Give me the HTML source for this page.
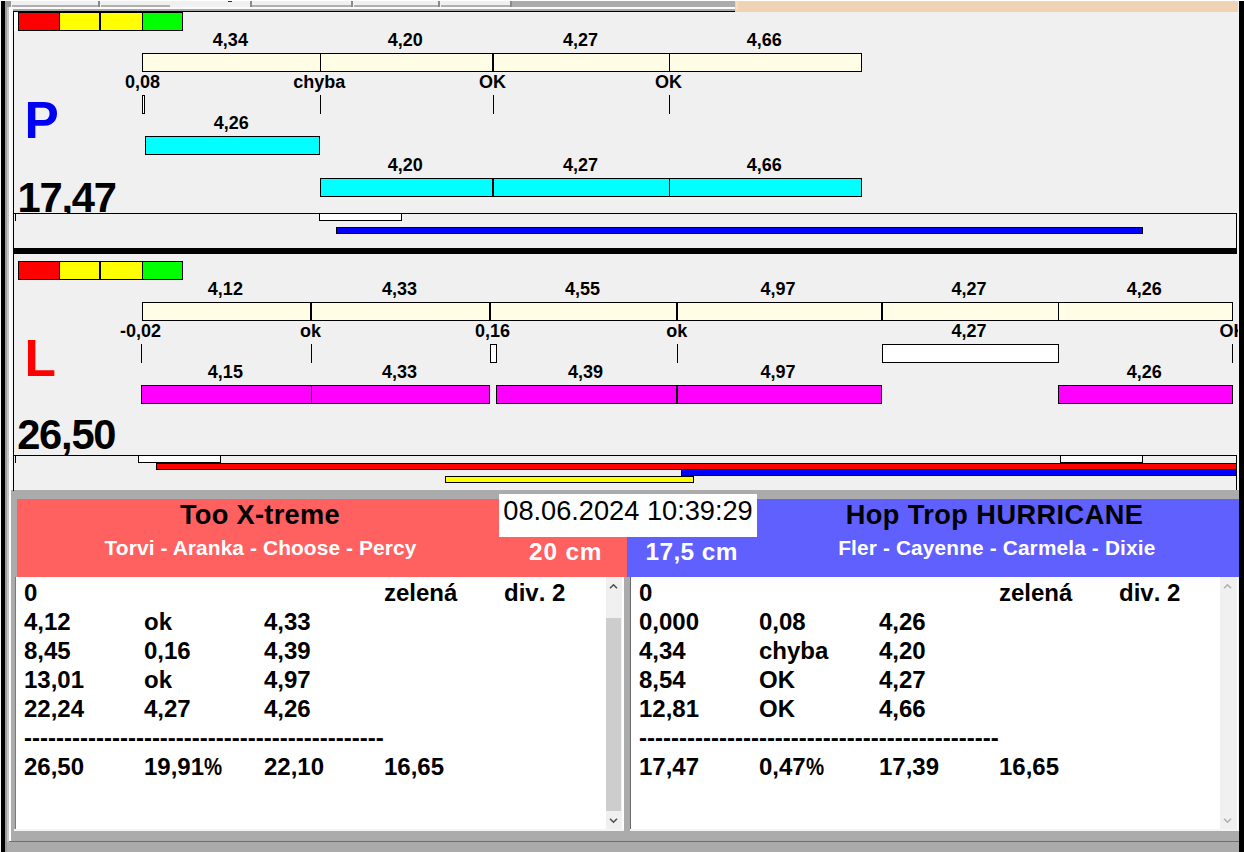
<!DOCTYPE html>
<html><head><meta charset="utf-8"><title>Timing</title>
<style>
html,body{margin:0;padding:0}
body{width:1244px;height:852px;position:relative;overflow:hidden;background:#F0F0F0;font-family:"Liberation Sans",sans-serif;font-kerning:none}
.r,.b,.t,.clip{position:absolute}
.b{box-sizing:border-box;border:1px solid #000}
.t{white-space:nowrap;color:#000}
.bl{font-weight:bold}
.rg{font-weight:normal}
.k{font-kerning:normal}
.clip{overflow:hidden}
.pc{display:inline-block;transform:scaleX(.85);transform-origin:0 50%}
</style></head><body>
<div class="r" style="left:0px;top:0px;width:1244px;height:1px;background:#ffffff"></div>
<div class="r" style="left:10px;top:1px;width:501px;height:9px;background:#f0f0f0"></div>
<div class="r" style="left:12px;top:5px;width:87px;height:2px;background:#b0b0b0"></div>
<div class="r" style="left:101px;top:5px;width:69px;height:2px;background:#b0b0b0"></div>
<div class="r" style="left:252px;top:5px;width:100px;height:2px;background:#b0b0b0"></div>
<div class="r" style="left:354px;top:5px;width:85px;height:2px;background:#b0b0b0"></div>
<div class="r" style="left:441px;top:5px;width:70px;height:2px;background:#b0b0b0"></div>
<div class="r" style="left:98px;top:1px;width:2px;height:7px;background:#8a8a8a"></div>
<div class="r" style="left:250px;top:1px;width:2px;height:7px;background:#8a8a8a"></div>
<div class="r" style="left:351px;top:1px;width:2px;height:7px;background:#8a8a8a"></div>
<div class="r" style="left:438px;top:1px;width:2px;height:7px;background:#8a8a8a"></div>
<div class="r" style="left:510px;top:1px;width:2px;height:7px;background:#8a8a8a"></div>
<div class="r" style="left:228px;top:1px;width:4px;height:1px;background:#333"></div>
<div class="r" style="left:512px;top:1px;width:223px;height:6px;background:#ababab"></div>
<div class="r" style="left:10px;top:7px;width:725px;height:2px;background:#fbfbfb"></div>
<div class="r" style="left:735px;top:1px;width:503px;height:11px;background:#F0D2B4"></div>
<div class="r" style="left:735px;top:1px;width:503px;height:1px;background:#E8D8C4"></div>
<div class="r" style="left:736px;top:2px;width:2px;height:8px;background:#F8E0C0"></div>
<div class="r" style="left:10px;top:9px;width:725px;height:2px;background:#a6a6a6"></div>
<div class="r" style="left:13px;top:11px;width:722px;height:1px;background:#000"></div>
<div class="r" style="left:14px;top:12px;width:5px;height:19px;background:#fff"></div>
<div class="b" style="left:18px;top:12px;width:42px;height:19px;background:#FF0000;"></div>
<div class="b" style="left:59px;top:12px;width:41px;height:19px;background:#FFFF00;"></div>
<div class="b" style="left:100px;top:12px;width:43px;height:19px;background:#FFFF00;"></div>
<div class="b" style="left:142px;top:12px;width:41px;height:19px;background:#00FF00;"></div>
<div class="b" style="left:142px;top:53px;width:179px;height:19px;background:#FFFDE6;"></div>
<div class="b" style="left:320px;top:53px;width:173px;height:19px;background:#FFFDE6;"></div>
<div class="b" style="left:493px;top:53px;width:177px;height:19px;background:#FFFDE6;"></div>
<div class="b" style="left:669px;top:53px;width:193px;height:19px;background:#FFFDE6;"></div>
<div class="t bl" style="top:31.06px;font-size:18px;line-height:18px;left:80.40px;width:300px;text-align:center;">4,34</div>
<div class="t bl" style="top:31.06px;font-size:18px;line-height:18px;left:255.30px;width:300px;text-align:center;">4,20</div>
<div class="t bl" style="top:31.06px;font-size:18px;line-height:18px;left:430.50px;width:300px;text-align:center;">4,27</div>
<div class="t bl" style="top:31.06px;font-size:18px;line-height:18px;left:614.30px;width:300px;text-align:center;">4,66</div>
<div class="t bl" style="top:73.06px;font-size:18px;line-height:18px;left:-7.40px;width:300px;text-align:center;">0,08</div>
<div class="t bl" style="top:73.06px;font-size:18px;line-height:18px;left:169.30px;width:300px;text-align:center;">chyba</div>
<div class="t bl" style="top:73.06px;font-size:18px;line-height:18px;left:342.50px;width:300px;text-align:center;">OK</div>
<div class="t bl" style="top:73.06px;font-size:18px;line-height:18px;left:518.50px;width:300px;text-align:center;">OK</div>
<div class="b" style="left:142px;top:95px;width:3px;height:19px;background:#fff;"></div>
<div class="r" style="left:320px;top:95px;width:1px;height:19px;background:#000"></div>
<div class="r" style="left:493px;top:95px;width:1px;height:19px;background:#000"></div>
<div class="r" style="left:669px;top:95px;width:1px;height:19px;background:#000"></div>
<div class="t bl" style="top:114.06px;font-size:18px;line-height:18px;left:81.30px;width:300px;text-align:center;">4,26</div>
<div class="b" style="left:145px;top:136px;width:175px;height:19px;background:#00FFFF;"></div>
<div class="t bl" style="top:156.06px;font-size:18px;line-height:18px;left:255.30px;width:300px;text-align:center;">4,20</div>
<div class="t bl" style="top:156.06px;font-size:18px;line-height:18px;left:430.50px;width:300px;text-align:center;">4,27</div>
<div class="t bl" style="top:156.06px;font-size:18px;line-height:18px;left:614.30px;width:300px;text-align:center;">4,66</div>
<div class="b" style="left:320px;top:178px;width:173px;height:19px;background:#00FFFF;"></div>
<div class="b" style="left:493px;top:178px;width:177px;height:19px;background:#00FFFF;"></div>
<div class="b" style="left:669px;top:178px;width:193px;height:19px;background:#00FFFF;"></div>
<div class="t bl" style="top:94.79px;font-size:51.4px;line-height:51.4px;left:24.60px;color:#0000F2;">P</div>
<div class="clip" style="left:14px;top:170px;width:300px;height:43px">
<div class="t bl" style="top:7.00px;font-size:41.7px;line-height:41.7px;left:3.60px;letter-spacing:-1.25px;">17,47</div>
</div>
<div class="r" style="left:14px;top:213px;width:1223px;height:1px;background:#000"></div>
<div class="r" style="left:15px;top:213px;width:1px;height:8px;background:#000"></div>
<div class="r" style="left:1236px;top:213px;width:1px;height:35px;background:#000"></div>
<div class="b" style="left:319px;top:213px;width:83px;height:8px;background:#fff;"></div>
<div class="b" style="left:336px;top:227px;width:807px;height:7px;background:#0000FF;"></div>
<div class="r" style="left:14px;top:248px;width:1223px;height:6px;background:#000"></div>
<div class="b" style="left:18px;top:261px;width:42px;height:19px;background:#FF0000;"></div>
<div class="b" style="left:59px;top:261px;width:41px;height:19px;background:#FFFF00;"></div>
<div class="b" style="left:100px;top:261px;width:43px;height:19px;background:#FFFF00;"></div>
<div class="b" style="left:142px;top:261px;width:41px;height:19px;background:#00FF00;"></div>
<div class="b" style="left:142px;top:302px;width:169px;height:19px;background:#FFFDE6;"></div>
<div class="b" style="left:311px;top:302px;width:179px;height:19px;background:#FFFDE6;"></div>
<div class="b" style="left:490px;top:302px;width:187px;height:19px;background:#FFFDE6;"></div>
<div class="b" style="left:677px;top:302px;width:205px;height:19px;background:#FFFDE6;"></div>
<div class="b" style="left:882px;top:302px;width:177px;height:19px;background:#FFFDE6;"></div>
<div class="b" style="left:1058px;top:302px;width:175px;height:19px;background:#FFFDE6;"></div>
<div class="t bl" style="top:280.06px;font-size:18px;line-height:18px;left:75.40px;width:300px;text-align:center;">4,12</div>
<div class="t bl" style="top:280.06px;font-size:18px;line-height:18px;left:249.50px;width:300px;text-align:center;">4,33</div>
<div class="t bl" style="top:280.06px;font-size:18px;line-height:18px;left:432.50px;width:300px;text-align:center;">4,55</div>
<div class="t bl" style="top:280.06px;font-size:18px;line-height:18px;left:628.00px;width:300px;text-align:center;">4,97</div>
<div class="t bl" style="top:280.06px;font-size:18px;line-height:18px;left:819.00px;width:300px;text-align:center;">4,27</div>
<div class="t bl" style="top:280.06px;font-size:18px;line-height:18px;left:994.30px;width:300px;text-align:center;">4,26</div>
<div class="t bl" style="top:322.06px;font-size:18px;line-height:18px;left:-9.40px;width:300px;text-align:center;">-0,02</div>
<div class="t bl" style="top:322.06px;font-size:18px;line-height:18px;left:160.60px;width:300px;text-align:center;">ok</div>
<div class="t bl" style="top:322.06px;font-size:18px;line-height:18px;left:342.50px;width:300px;text-align:center;">0,16</div>
<div class="t bl" style="top:322.06px;font-size:18px;line-height:18px;left:526.80px;width:300px;text-align:center;">ok</div>
<div class="t bl" style="top:322.06px;font-size:18px;line-height:18px;left:819.00px;width:300px;text-align:center;">4,27</div>
<div class="clip" style="left:1200px;top:318px;width:38px;height:26px">
<div class="t bl" style="top:4.06px;font-size:18px;line-height:18px;left:19.50px;">OK</div>
</div>
<div class="r" style="left:141px;top:344px;width:1px;height:19px;background:#000"></div>
<div class="r" style="left:311px;top:344px;width:1px;height:19px;background:#000"></div>
<div class="b" style="left:490px;top:344px;width:7px;height:19px;background:#fff;"></div>
<div class="r" style="left:677px;top:344px;width:1px;height:19px;background:#000"></div>
<div class="b" style="left:882px;top:344px;width:177px;height:19px;background:#fff;"></div>
<div class="r" style="left:1232px;top:344px;width:1px;height:19px;background:#000"></div>
<div class="t bl" style="top:363.06px;font-size:18px;line-height:18px;left:75.40px;width:300px;text-align:center;">4,15</div>
<div class="t bl" style="top:363.06px;font-size:18px;line-height:18px;left:249.50px;width:300px;text-align:center;">4,33</div>
<div class="t bl" style="top:363.06px;font-size:18px;line-height:18px;left:435.50px;width:300px;text-align:center;">4,39</div>
<div class="t bl" style="top:363.06px;font-size:18px;line-height:18px;left:628.00px;width:300px;text-align:center;">4,97</div>
<div class="t bl" style="top:363.06px;font-size:18px;line-height:18px;left:994.30px;width:300px;text-align:center;">4,26</div>
<div class="b" style="left:141px;top:385px;width:171px;height:19px;background:#FF00FF;"></div>
<div class="b" style="left:311px;top:385px;width:179px;height:19px;background:#FF00FF;"></div>
<div class="b" style="left:496px;top:385px;width:181px;height:19px;background:#FF00FF;"></div>
<div class="b" style="left:677px;top:385px;width:205px;height:19px;background:#FF00FF;"></div>
<div class="b" style="left:1058px;top:385px;width:175px;height:19px;background:#FF00FF;"></div>
<div class="t bl" style="top:333.29px;font-size:51.4px;line-height:51.4px;left:24.50px;color:#FF0000;">L</div>
<div class="t bl" style="top:414.00px;font-size:41.7px;line-height:41.7px;left:17.20px;letter-spacing:-1.25px;">26,50</div>
<div class="r" style="left:14px;top:455px;width:1223px;height:1px;background:#000"></div>
<div class="r" style="left:15px;top:455px;width:1px;height:8px;background:#000"></div>
<div class="r" style="left:1236px;top:455px;width:1px;height:35px;background:#000"></div>
<div class="b" style="left:138px;top:455px;width:83px;height:8px;background:#fff;"></div>
<div class="b" style="left:1060px;top:455px;width:83px;height:8px;background:#fff;"></div>
<div class="b" style="left:156px;top:463px;width:1081px;height:7px;background:#FF0000;"></div>
<div class="b" style="left:681px;top:469px;width:556px;height:7px;background:#0000FF;"></div>
<div class="b" style="left:445px;top:476px;width:249px;height:7px;background:#FFFF00;"></div>
<div class="r" style="left:13px;top:490px;width:1226px;height:9px;background:#ababab"></div>
<div class="r" style="left:11px;top:490px;width:6px;height:362px;background:#ababab"></div>
<div class="r" style="left:17px;top:499px;width:610px;height:78px;background:#FF6060"></div>
<div class="r" style="left:627px;top:499px;width:612px;height:78px;background:#6060FF"></div>
<div class="r" style="left:499px;top:494px;width:258px;height:43px;background:#fff"></div>
<div class="t rg" style="top:497.08px;font-size:27.2px;line-height:27.2px;left:488.00px;width:280px;text-align:center;">08.06.2024 10:39:29</div>
<div class="t bl k" style="top:500.78px;font-size:27.2px;line-height:27.2px;left:19.90px;width:480px;text-align:center;letter-spacing:0.3px;">Too X-treme</div>
<div class="t bl k" style="top:538.11px;font-size:20.9px;line-height:20.9px;left:20.50px;width:480px;text-align:center;color:#fff;letter-spacing:0.1px;">Torvi - Aranka - Choose - Percy</div>
<div class="t bl k" style="top:500.78px;font-size:27.2px;line-height:27.2px;left:754.50px;width:480px;text-align:center;letter-spacing:0.43px;">Hop Trop HURRICANE</div>
<div class="t bl k" style="top:538.19px;font-size:20.8px;line-height:20.8px;left:756.80px;width:480px;text-align:center;color:#fff;letter-spacing:0.16px;">Fler - Cayenne - Carmela - Dixie</div>
<div class="t bl" style="top:540.25px;font-size:24.4px;line-height:24.4px;left:529.00px;color:#fff;letter-spacing:0.85px;">20 cm</div>
<div class="t bl" style="top:540.25px;font-size:24.4px;line-height:24.4px;left:645.50px;color:#fff;letter-spacing:0.4px;">17,5 cm</div>
<div class="r" style="left:16px;top:577px;width:608px;height:253px;background:#fff"></div>
<div class="r" style="left:15px;top:577px;width:1px;height:253px;background:#7a7a7a"></div>
<div class="r" style="left:624px;top:577px;width:6px;height:254px;background:#ababab"></div>
<div class="r" style="left:630px;top:577px;width:1px;height:253px;background:#696969"></div>
<div class="r" style="left:631px;top:577px;width:607px;height:253px;background:#fff"></div>
<div class="r" style="left:14px;top:829px;width:1225px;height:2px;background:#f4f4f4"></div>
<div class="r" style="left:624px;top:829px;width:6px;height:2px;background:#ababab"></div>
<div class="r" style="left:5px;top:831px;width:1234px;height:21px;background:#ababab"></div>
<div class="r" style="left:5px;top:841px;width:1234px;height:1px;background:#6e6e6e"></div>
<div class="r" style="left:606px;top:577px;width:16px;height:252px;background:#f0f0f0"></div>
<div class="r" style="left:606px;top:618px;width:15px;height:193px;background:#cdcdcd"></div>
<div class="r" style="left:1220px;top:577px;width:17px;height:252px;background:#f0f0f0"></div>
<svg class="r" style="left:606px;top:577px" width="17" height="252"><path d="M4 11.3 L7.5 7.8 L11 11.3" fill="none" stroke="#505050" stroke-width="1.6"/><path d="M4 241.7 L7.5 245.2 L11 241.7" fill="none" stroke="#505050" stroke-width="1.6"/></svg>
<svg class="r" style="left:1220px;top:577px" width="17" height="252"><path d="M4 11.3 L7.5 7.8 L11 11.3" fill="none" stroke="#b0b0b0" stroke-width="1.6"/><path d="M4 241.7 L7.5 245.2 L11 241.7" fill="none" stroke="#b0b0b0" stroke-width="1.6"/></svg>
<div class="t bl" style="top:580.98px;font-size:24px;line-height:24px;left:24.00px;">0</div>
<div class="t bl" style="top:580.98px;font-size:24px;line-height:24px;left:384.00px;">zelená</div>
<div class="t bl" style="top:580.98px;font-size:24px;line-height:24px;left:504.00px;">div. 2</div>
<div class="t bl" style="top:609.98px;font-size:24px;line-height:24px;left:24.00px;">4,12</div>
<div class="t bl" style="top:609.98px;font-size:24px;line-height:24px;left:144.00px;">ok</div>
<div class="t bl" style="top:609.98px;font-size:24px;line-height:24px;left:264.00px;">4,33</div>
<div class="t bl" style="top:638.98px;font-size:24px;line-height:24px;left:24.00px;">8,45</div>
<div class="t bl" style="top:638.98px;font-size:24px;line-height:24px;left:144.00px;">0,16</div>
<div class="t bl" style="top:638.98px;font-size:24px;line-height:24px;left:264.00px;">4,39</div>
<div class="t bl" style="top:667.98px;font-size:24px;line-height:24px;left:24.00px;">13,01</div>
<div class="t bl" style="top:667.98px;font-size:24px;line-height:24px;left:144.00px;">ok</div>
<div class="t bl" style="top:667.98px;font-size:24px;line-height:24px;left:264.00px;">4,97</div>
<div class="t bl" style="top:696.98px;font-size:24px;line-height:24px;left:24.00px;">22,24</div>
<div class="t bl" style="top:696.98px;font-size:24px;line-height:24px;left:144.00px;">4,27</div>
<div class="t bl" style="top:696.98px;font-size:24px;line-height:24px;left:264.00px;">4,26</div>
<div class="t bl" style="top:725.98px;font-size:24px;line-height:24px;left:24.00px;">---------------------------------------------</div>
<div class="t bl" style="top:754.98px;font-size:24px;line-height:24px;left:24.00px;">26,50</div>
<div class="t bl" style="top:754.98px;font-size:24px;line-height:24px;left:144.00px;">19,91<span class="pc">%</span></div>
<div class="t bl" style="top:754.98px;font-size:24px;line-height:24px;left:264.00px;">22,10</div>
<div class="t bl" style="top:754.98px;font-size:24px;line-height:24px;left:384.00px;">16,65</div>
<div class="t bl" style="top:580.98px;font-size:24px;line-height:24px;left:639.00px;">0</div>
<div class="t bl" style="top:580.98px;font-size:24px;line-height:24px;left:999.00px;">zelená</div>
<div class="t bl" style="top:580.98px;font-size:24px;line-height:24px;left:1119.00px;">div. 2</div>
<div class="t bl" style="top:609.98px;font-size:24px;line-height:24px;left:639.00px;">0,000</div>
<div class="t bl" style="top:609.98px;font-size:24px;line-height:24px;left:759.00px;">0,08</div>
<div class="t bl" style="top:609.98px;font-size:24px;line-height:24px;left:879.00px;">4,26</div>
<div class="t bl" style="top:638.98px;font-size:24px;line-height:24px;left:639.00px;">4,34</div>
<div class="t bl" style="top:638.98px;font-size:24px;line-height:24px;left:759.00px;">chyba</div>
<div class="t bl" style="top:638.98px;font-size:24px;line-height:24px;left:879.00px;">4,20</div>
<div class="t bl" style="top:667.98px;font-size:24px;line-height:24px;left:639.00px;">8,54</div>
<div class="t bl" style="top:667.98px;font-size:24px;line-height:24px;left:759.00px;">OK</div>
<div class="t bl" style="top:667.98px;font-size:24px;line-height:24px;left:879.00px;">4,27</div>
<div class="t bl" style="top:696.98px;font-size:24px;line-height:24px;left:639.00px;">12,81</div>
<div class="t bl" style="top:696.98px;font-size:24px;line-height:24px;left:759.00px;">OK</div>
<div class="t bl" style="top:696.98px;font-size:24px;line-height:24px;left:879.00px;">4,66</div>
<div class="t bl" style="top:725.98px;font-size:24px;line-height:24px;left:639.00px;">---------------------------------------------</div>
<div class="t bl" style="top:754.98px;font-size:24px;line-height:24px;left:639.00px;">17,47</div>
<div class="t bl" style="top:754.98px;font-size:24px;line-height:24px;left:759.00px;">0,47<span class="pc">%</span></div>
<div class="t bl" style="top:754.98px;font-size:24px;line-height:24px;left:879.00px;">17,39</div>
<div class="t bl" style="top:754.98px;font-size:24px;line-height:24px;left:999.00px;">16,65</div>
<div class="r" style="left:0px;top:0px;width:1px;height:852px;background:#f4f4f4"></div>
<div class="r" style="left:1px;top:1px;width:4px;height:851px;background:#000"></div>
<div class="r" style="left:5px;top:1px;width:2px;height:851px;background:#9c9c9c"></div>
<div class="r" style="left:7px;top:1px;width:2px;height:851px;background:#c4c4c4"></div>
<div class="r" style="left:9px;top:8px;width:2px;height:833px;background:#ffffff"></div>
<div class="r" style="left:11px;top:8px;width:2px;height:482px;background:#f6f6f6"></div>
<div class="r" style="left:7px;top:1px;width:4px;height:6px;background:#9a9a9a"></div>
<div class="r" style="left:13px;top:11px;width:1px;height:480px;background:#000"></div>
<div class="r" style="left:7px;top:842px;width:6px;height:10px;background:#ababab"></div>
<div class="r" style="left:1238px;top:12px;width:1px;height:478px;background:#f4f4f4"></div>
<div class="r" style="left:1239px;top:1px;width:5px;height:851px;background:#000"></div>
</body></html>
